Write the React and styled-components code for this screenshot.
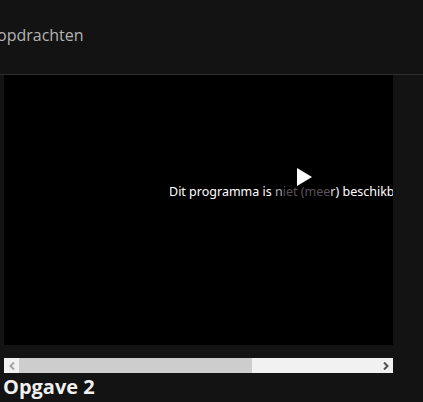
import React from "react";
import styled, { createGlobalStyle } from "styled-components";

const Global = createGlobalStyle`
  html, body {
    margin: 0;
    padding: 0;
    background: #131313;
    overflow: hidden;
  }
`;

const Page = styled.div`
  width: 423px;
  height: 402px;
  overflow: hidden;
  background: #131313;
  font-family: "Open Sans", "Noto Sans", sans-serif;
`;

const Header = styled.header`
  height: 70px;
  padding-bottom: 4px;
  display: flex;
  align-items: center;
  border-bottom: 1px solid #2e2e2e;
  box-sizing: content-box;
`;

const HeaderTitle = styled.span`
  margin-left: -3px;
  color: #b4b4b4;
  font-size: 16px;
  line-height: 22px;
`;

const Content = styled.main`
  padding: 0 30px 0 4px;
`;

const Player = styled.div`
  height: 270px;
  background: #000;
  overflow: hidden;
  display: flex;
  flex-direction: column;
  padding: 93px 0 0 165px;
  box-sizing: border-box;
`;

const PlayIcon = styled.svg`
  width: 17px;
  height: 18px;
  margin-left: 127px;
  display: block;
  flex: none;
`;

const Message = styled.div`
  width: 320px;
  margin-top: -2px;
  font-family: "Noto Sans", "Open Sans", sans-serif;
  font-size: 12.5px;
  line-height: 16px;
  white-space: nowrap;
  color: #fff;
`;

const Dim = styled.span`
  color: ${(p) => p.$tone};
`;

const Scrollbar = styled.div`
  margin-top: 13px;
  height: 15px;
  display: flex;
  background: #f1f1f1;
`;

const ArrowButton = styled.div`
  width: 15px;
  flex: none;
  display: flex;
  align-items: center;
  justify-content: center;
`;

const Thumb = styled.div`
  width: 233px;
  flex: none;
  background: #cdcdcd;
`;

const Track = styled.div`
  flex: 1;
`;

const Title = styled.h2`
  margin: 0 0 0 -1px;
  color: #f0f0f0;
  font-size: 20px;
  font-weight: 700;
  line-height: 27px;
`;

const App = () => {
  return (
    <Page>
      <Global />
      <Header>
        <HeaderTitle>opdrachten</HeaderTitle>
      </Header>
      <Content>
        <Player>
          <PlayIcon viewBox="0 0 17 18">
            <path d="M1 0 L16 9 L1 18 Z" fill="#fff" />
          </PlayIcon>
          <Message>
            Dit programma is <Dim $tone="#b3a8b3">n</Dim>
            <Dim $tone="#5a5258">iet (mee</Dim>
            <Dim $tone="#d8d8d8">r</Dim>) beschikbaar
          </Message>
        </Player>
        <Scrollbar>
          <ArrowButton>
            <svg width="8" height="8" viewBox="0 0 8 8">
              <path d="M6 0.5 L2.5 4 L6 7.5" fill="none" stroke="#a3a3a3" strokeWidth="2" />
            </svg>
          </ArrowButton>
          <Thumb />
          <Track />
          <ArrowButton>
            <svg width="8" height="8" viewBox="0 0 8 8">
              <path d="M2 0.5 L5.5 4 L2 7.5" fill="none" stroke="#505050" strokeWidth="2" />
            </svg>
          </ArrowButton>
        </Scrollbar>
        <Title>Opgave 2</Title>
      </Content>
    </Page>
  );
};

export default App;
